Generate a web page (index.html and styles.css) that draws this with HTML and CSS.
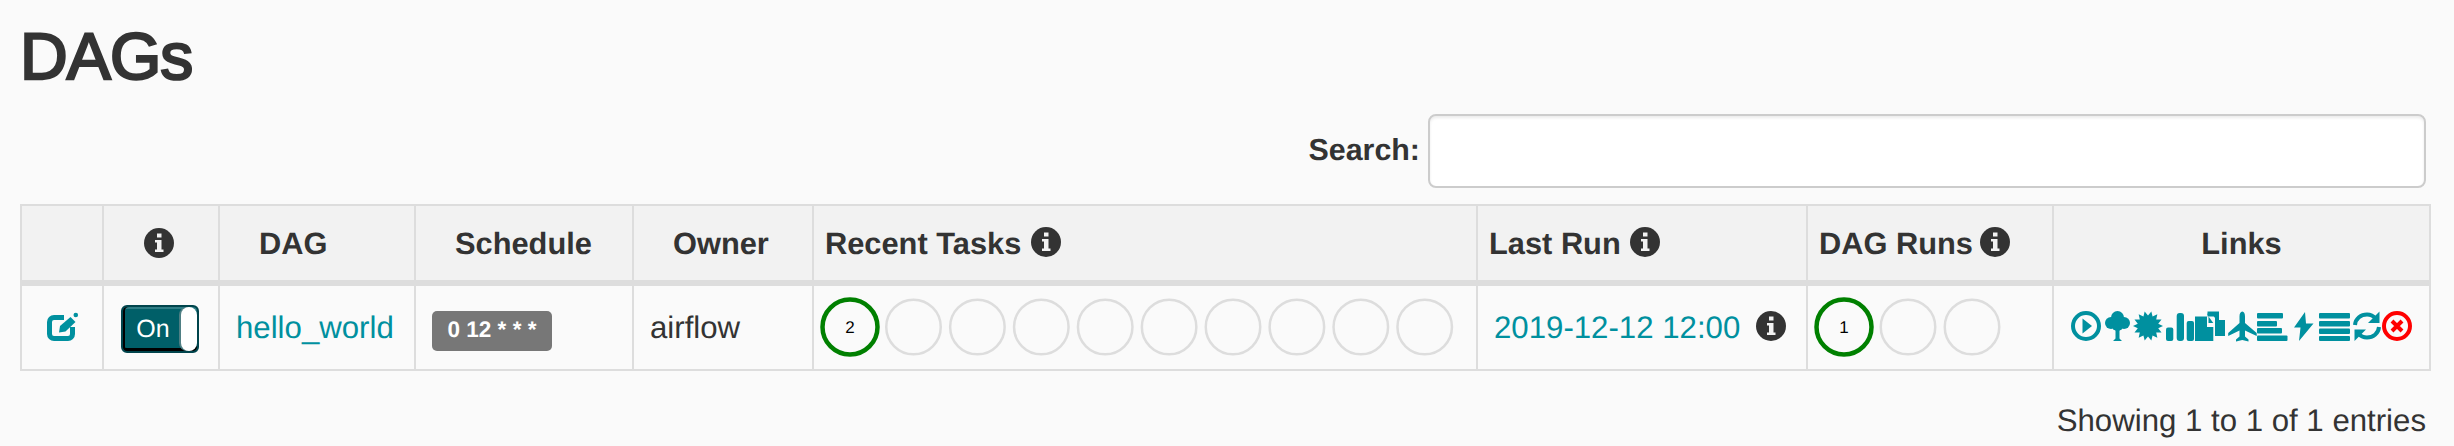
FILE: index.html
```html
<!DOCTYPE html>
<html lang="en">
<head>
<meta charset="utf-8">
<title>DAGs</title>
<link rel="stylesheet" href="styles.css">
</head>
<body>
<h1 class="title">DAGs</h1>
<div class="search-row">
  <label class="search-label" for="search">Search:</label>
  <input class="search-input" id="search" type="search">
</div>
<table class="dags">
  <colgroup>
    <col class="c1"><col class="c2"><col class="c3"><col class="c4"><col class="c5"><col class="c6"><col class="c7"><col class="c8"><col class="c9">
  </colgroup>
  <thead>
    <tr>
      <th></th>
      <th class="center"><svg class="info" viewBox="0 0 30 30"><use href="#i-info"/></svg></th>
      <th class="sort">DAG</th>
      <th class="sort">Schedule</th>
      <th class="sort">Owner</th>
      <th>Recent Tasks <svg class="info" viewBox="0 0 30 30"><use href="#i-info"/></svg></th>
      <th>Last Run <svg class="info" viewBox="0 0 30 30"><use href="#i-info"/></svg></th>
      <th>DAG Runs <svg class="info info-tight" viewBox="0 0 30 30"><use href="#i-info"/></svg></th>
      <th class="center">Links</th>
    </tr>
  </thead>
  <tbody>
    <tr>
      <td class="center">
        <svg class="edit" viewBox="0 0 32 30"><path class="edit-box" d="M17 5.500H7A4.500 4.500 0 0 0 2.500 10V22A4.500 4.500 0 0 0 7 26.500H21A4.500 4.500 0 0 0 25.500 22V15"/><path class="ic" d="M12 20.500l1-6.500L23.500 5l5 5-10 9.500z"/><circle class="ic" cx="28.800" cy="3" r="2.300"/></svg>
      </td>
      <td class="center">
        <div class="toggle"><span class="toggle-on">On</span><span class="toggle-knob"></span></div>
      </td>
      <td><a class="link" href="#">hello_world</a></td>
      <td><span class="label">0 12 * * *</span></td>
      <td>airflow</td>
      <td class="circles-cell">
        <svg class="circles tasks" viewBox="0 0 640 62">
          <circle class="ok" cx="30" cy="31" r="27.500"/><text class="count" x="30" y="37">2</text>
          <circle class="idle" cx="93.500" cy="31" r="27.250"/><circle class="idle" cx="157.400" cy="31" r="27.250"/><circle class="idle" cx="221.300" cy="31" r="27.250"/><circle class="idle" cx="285.200" cy="31" r="27.250"/><circle class="idle" cx="349.100" cy="31" r="27.250"/><circle class="idle" cx="413" cy="31" r="27.250"/><circle class="idle" cx="476.900" cy="31" r="27.250"/><circle class="idle" cx="540.800" cy="31" r="27.250"/><circle class="idle" cx="604.700" cy="31" r="27.250"/>
        </svg>
      </td>
      <td class="lastrun"><a class="link" href="#">2019-12-12 12:00</a><svg class="info run-info" viewBox="0 0 30 30"><use href="#i-info"/></svg></td>
      <td class="circles-cell">
        <svg class="circles runs" viewBox="0 0 192 62">
          <circle class="ok" cx="30" cy="31" r="27.500"/><text class="count" x="30" y="37">1</text>
          <circle class="idle" cx="94" cy="31" r="27.250"/><circle class="idle" cx="158" cy="31" r="27.250"/>
        </svg>
      </td>
      <td class="center">
        <div class="links">
          <svg class="w30" viewBox="0 0 30 32"><circle class="ring" cx="15" cy="16" r="13"/><path class="ic" d="M11.500 8.500L21 16l-9.500 7.500z"/></svg>
          <svg class="w32" viewBox="0 0 32 32"><g class="ic"><circle cx="16.500" cy="7.500" r="6.500"/><circle cx="10" cy="13" r="6"/><circle cx="23" cy="13" r="6"/><circle cx="16.500" cy="15" r="6"/><path d="M14.500 15h4v13.500l2.500 2.500H12l2.500-2.500z"/></g></svg>
          <svg class="w33" viewBox="0 0 33 32"><polygon class="ic" transform="translate(0 1)" points="30,15 25.240,17.340 28.520,21.510 23.210,21.550 24.350,26.730 19.560,24.460 18.340,29.620 15,25.500 11.660,29.620 10.440,24.460 5.650,26.730 6.790,21.550 1.480,21.510 4.760,17.340 0,15 4.760,12.660 1.480,8.490 6.790,8.450 5.650,3.270 10.440,5.540 11.660,0.380 15,4.500 18.340,0.380 19.560,5.540 24.350,3.270 23.210,8.450 28.520,8.490 25.240,12.660"/></svg>
          <svg class="w29" viewBox="0 0 29 32"><g class="ic"><rect x="0" y="17.500" width="7.300" height="13.500" rx="2"/><rect x="10.700" y="3" width="7.300" height="28" rx="3"/><rect x="20.700" y="11" width="7.300" height="20" rx="2"/></g></svg>
          <svg class="w30" viewBox="0 0 30 32"><g class="ic"><path d="M0 6.500H12V17H18.300V31H0z"/><path d="M13.500 6.500L18.300 13H13.500z"/><path d="M12.500 1.500H24V6.500H12.500z"/><path d="M20 8V26H30V10H24V3.500H12.500V5H18z"/></g><path class="cut" d="M25 4.500L29 9H25z"/></svg>
          <svg class="w32" viewBox="0 0 32 32"><path class="ic" d="M17.300 1.500c1.800 0 2.700 2.400 2.700 5v6.500l11.700 10v3L20 20.500v6l3.500 3v2l-6.200-1.500-6.300 1.500v-2l3.500-3v-6L3.200 26v-3l11.300-10V6.500c0-2.600 1-5 2.800-5z"/></svg>
          <svg class="w31" viewBox="0 0 31 32"><g class="ic"><rect x="0" y="3" width="26" height="5.500" rx="1"/><rect x="0" y="11" width="20" height="5.500" rx="1"/><rect x="0" y="18" width="25" height="5.500" rx="1"/><rect x="0" y="25.500" width="30.500" height="5.500" rx="1"/></g></svg>
          <svg class="w31" viewBox="0 0 31 32"><path class="ic" d="M17 2L6 17.500l6.500 0L11 31 25.500 13.500l-7.500 0z"/></svg>
          <svg class="w31" viewBox="0 0 31 32"><g class="ic"><rect x="0" y="3" width="31" height="5.500" rx="1"/><rect x="0" y="11" width="31" height="5.500" rx="1"/><rect x="0" y="18.500" width="31" height="5.500" rx="1"/><rect x="0" y="26" width="31" height="5" rx="1"/></g></svg>
          <svg class="w32" viewBox="0 0 32 32"><path class="arc" d="M5 15C5.500 8.500 11 4.500 17 4.500c3.500 0 6.500 1.500 8.500 4"/><path class="ic" d="M29.500 1.500V13H18z"/><path class="arc" d="M29 17c-.5 6.500-6 10.500-12 10.500-3.500 0-6.500-1.500-8.500-4"/><path class="ic" d="M4.500 31V19.500H16z"/></svg>
          <svg class="w30" viewBox="0 0 30 32"><circle class="ring-red" cx="15" cy="16" r="13"/><path class="x" d="M10 11l10 10M20 11L10 21"/></svg>
        </div>
      </td>
    </tr>
  </tbody>
</table>
<div class="info-row">Showing 1 to 1 of 1 entries</div>
<svg class="defs" aria-hidden="true"><defs><g id="i-info"><circle cx="15" cy="15" r="15" fill="#333"/><path fill="#f2f2f2" d="M13 5.500h4.500V9.500H13zM11 12h6.500v9.500H19.500V24H11V21.500H13V14.500H11z"/></g></defs></svg>
</body>
</html>
```
FILE: styles.css
```css
html, body {
  margin: 0;
  padding: 0;
}
body {
  background: #fafafa;
  color: #333;
  font-family: "Liberation Sans", Arial, sans-serif;
  font-size: 31.2px;
  line-height: 1.43;
  padding: 0 23px 0 20px;
  height: 446px;
  box-sizing: border-box;
  overflow: hidden;
  text-rendering: geometricPrecision;
}
.title {
  margin: 0;
  padding: 23px 0 0 0;
  font-size: 66px;
  line-height: 66px;
  height: 91px;
  box-sizing: border-box;
  font-weight: 400;
  letter-spacing: -0.9px;
  -webkit-text-stroke: 2.4px #333;
}
.search-row {
  display: flex;
  justify-content: flex-end;
  align-items: center;
  gap: 8px;
  height: 74px;
  margin-top: 23px;
  padding-right: 5px;
}
.search-label {
  font-weight: 700;
  font-size: 30.4px;
}
.search-input {
  width: 998px;
  height: 74px;
  box-sizing: border-box;
  border: 2px solid #ccc;
  border-radius: 8px;
  background: #fff;
  box-shadow: inset 0 2px 3px rgba(0, 0, 0, .08);
  outline: 0;
}
.dags {
  border-collapse: collapse;
  table-layout: fixed;
  width: 2411px;
  margin-top: 16px;
}
.c1 { width: 82px; }
.c2 { width: 116px; }
.c3 { width: 196px; }
.c4 { width: 218px; }
.c5 { width: 180px; }
.c6 { width: 664px; }
.c7 { width: 330px; }
.c8 { width: 246px; }
.c9 { width: 377px; }
th, td {
  border: 2px solid #ddd;
  padding: 0 0 0 11px;
  text-align: left;
  vertical-align: middle;
}
th {
  background: #f2f2f2;
  height: 71px;
  padding-top: 3px;
  border-bottom-width: 6px;
  font-size: 30.8px;
  font-weight: 700;
  white-space: nowrap;
}
td {
  height: 81px;
  padding-top: 2px;
  padding-left: 16px;
  background: #fafafa;
  white-space: nowrap;
}
th.sort {
  padding-left: 39px;
}
th.center, td.center {
  padding-left: 0;
  text-align: center;
}
td.circles-cell {
  padding-left: 6px;
  padding-top: 0;
  padding-bottom: 2px;
}
.info {
  width: 30px;
  height: 30px;
  vertical-align: -3px;
}
th .info {
  margin-left: 1px;
}
th .info-tight {
  margin-left: -2px;
}
th.center .info {
  display: block;
  margin: 0 0 3px 40px;
}
.run-info {
  margin-left: 16px;
  vertical-align: -3px;
}
.link {
  color: #00909f;
  text-decoration: none;
}
.edit {
  display: block;
  width: 32px;
  height: 30px;
  margin: -3px 0 0 25px;
}
.edit-box {
  fill: none;
  stroke: #00909f;
  stroke-width: 5;
}
.ic {
  fill: #00909f;
}
.toggle {
  display: flex;
  width: 78px;
  height: 48px;
  box-sizing: border-box;
  margin: 0 0 0 17px;
  border: 2px solid #00444c;
  border-radius: 6px;
  background: #005f68;
  box-shadow: inset 2px 0 0 #000, inset 0 -3px 0 #000, inset 0 2px 0 #2f7d85;
  color: #fff;
  font-size: 25px;
  line-height: 44px;
  overflow: hidden;
}
.toggle-on {
  flex: 1;
  text-align: center;
  padding-left: 2px;
}
.toggle-knob {
  width: 16px;
  background: #fff;
  border-radius: 8px;
  box-shadow: -2px 0 0 #4f7f84;
}
.label {
  display: inline-block;
  width: 120px;
  height: 40px;
  margin-top: 2px;
  box-sizing: border-box;
  border-radius: 5px;
  background: #777;
  color: #fff;
  font-size: 22.5px;
  font-weight: 700;
  line-height: 38px;
  text-align: center;
  vertical-align: middle;
}
.circles {
  display: block;
  height: 62px;
}
.tasks {
  width: 640px;
}
.runs {
  width: 192px;
}
.ok {
  fill: none;
  stroke: #008000;
  stroke-width: 4.5;
}
.idle {
  fill: none;
  stroke: #ddd;
  stroke-width: 2.5;
}
.count {
  fill: #000;
  font-size: 17px;
  text-anchor: middle;
}
.links {
  display: flex;
  justify-content: center;
  margin-bottom: 5px;
}
.links svg {
  display: block;
  height: 32px;
  flex: none;
}
.w29 { width: 29px; }
.w30 { width: 30px; }
.w31 { width: 31px; }
.w32 { width: 32px; }
.w33 { width: 33px; }
.ring {
  fill: none;
  stroke: #00909f;
  stroke-width: 4;
}
.ring-red {
  fill: none;
  stroke: #f00;
  stroke-width: 4;
}
.x {
  fill: none;
  stroke: #f00;
  stroke-width: 4;
}
.arc {
  fill: none;
  stroke: #00909f;
  stroke-width: 4;
}
.cut {
  fill: #fafafa;
}
.info-row {
  margin-top: 28px;
  padding-right: 5px;
  text-align: right;
}
.defs {
  display: block;
  width: 0;
  height: 0;
}
```
